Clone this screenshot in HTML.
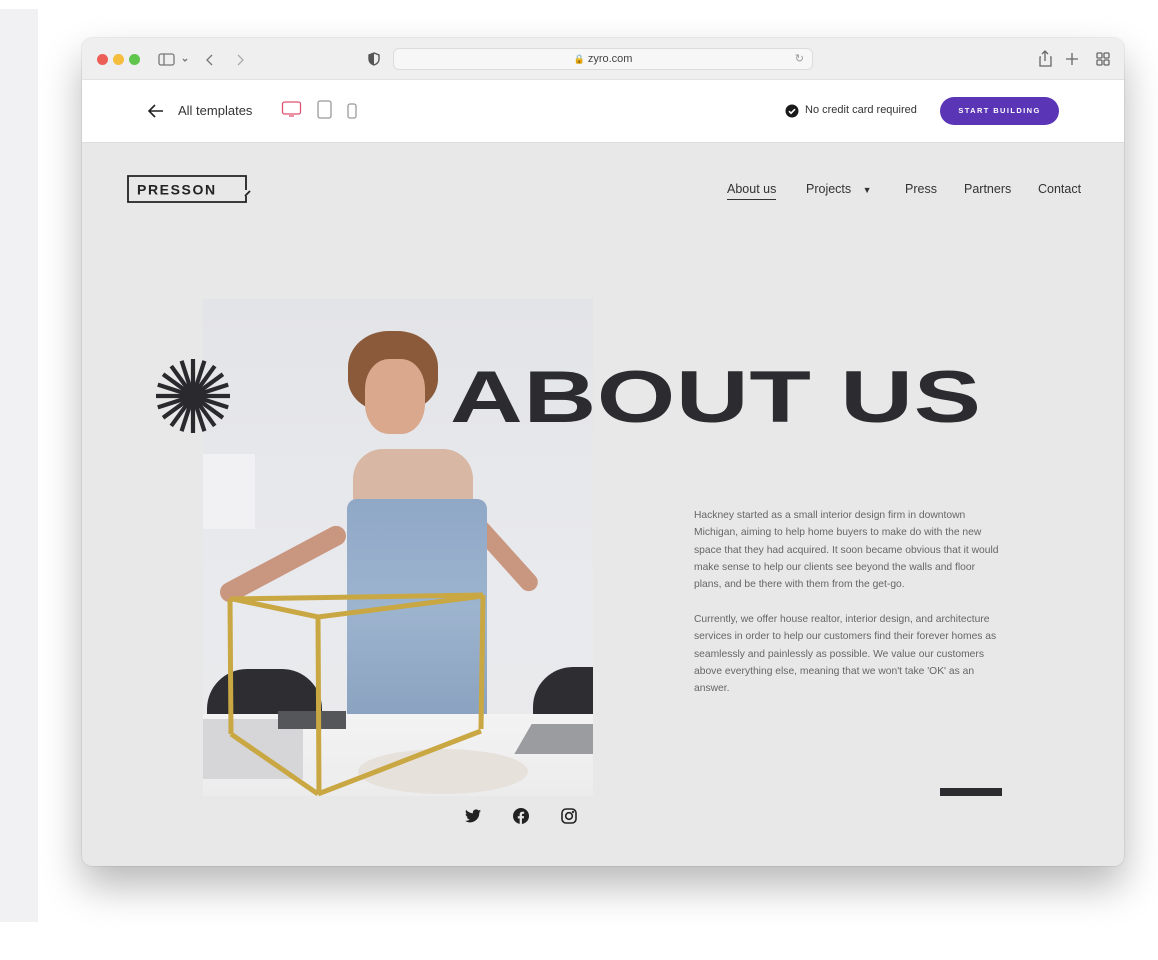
<!DOCTYPE html>
<html><head><meta charset="utf-8">
<style>
*{margin:0;padding:0;box-sizing:border-box}
body{width:1158px;height:960px;background:#fff;position:relative;overflow:hidden;font-family:"Liberation Sans",sans-serif}
.strip{position:absolute;left:0;top:9px;width:38px;height:913px;background:#f1f1f3}
.win{position:absolute;left:82px;top:38px;width:1042px;height:828px;border-radius:10px;overflow:hidden;background:#e8e8e8;box-shadow:0 20px 40px rgba(0,0,0,.28),0 0 0 1px rgba(0,0,0,.06)}
.tb{position:absolute;left:0;top:0;width:100%;height:42px;background:#efefef;border-bottom:1px solid #e2e2e2}
.dot{position:absolute;top:16px;width:11px;height:11px;border-radius:50%}
.url{position:absolute;left:311px;top:10px;width:420px;height:22px;border-radius:6px;background:#f7f7f7;border:1px solid #dcdcdc;font-size:11px;color:#444;text-align:center;line-height:20px}
.wb{position:absolute;left:0;top:42px;width:100%;height:63px;background:#fff;border-bottom:1px solid #ddd}
.abs{position:absolute}
.nav{position:absolute;top:144px;font-size:12.5px;color:#333}
.para{position:absolute;left:612px;width:310px;font-size:10.3px;line-height:17.3px;color:#666}
</style></head><body>
<div class="strip"></div>
<div class="win">
 <div class="tb">
  <div class="dot" style="left:15px;background:#ec5f57"></div>
  <div class="dot" style="left:31px;background:#f4bd3b"></div>
  <div class="dot" style="left:47px;background:#5fc54b"></div>
  <svg class="abs" style="left:76px;top:14px" width="60" height="16" viewBox="0 0 60 16" fill="none" stroke="#777" stroke-width="1.3"><rect x="1" y="2" width="15" height="11" rx="2"/><line x1="6" y1="2" x2="6" y2="13"/><path d="M25 7l2 2 2-2"/><path d="M54 3l-5 5 5 5"/></svg>
  <svg class="abs" style="left:153px;top:14px" width="12" height="16" fill="none" stroke="#aaa" stroke-width="1.3"><path d="M3 3l5 5-5 5"/></svg>
  <svg class="abs" style="left:286px;top:14px" width="12" height="14" viewBox="0 0 12 14"><path d="M6 1L1 3v4c0 3 2 5 5 6 3-1 5-3 5-6V3z" fill="none" stroke="#555" stroke-width="1.4"/><path d="M6 1v12c-3-1-5-3-5-6V3z" fill="#555"/></svg>
  <div class="url"><span style="font-size:9px;color:#888">🔒</span> zyro.com<span style="position:absolute;right:8px;color:#999">↻</span></div>
  <svg class="abs" style="left:956px;top:12px" width="76" height="18" fill="none" stroke="#666" stroke-width="1.3"><path d="M3 7h-1v9h11V7h-1M7 1v10M4 4l3-3 3 3"/><path d="M34 3v12M28 9h12"/><rect x="59" y="3" width="5" height="5" rx="1"/><rect x="66" y="3" width="5" height="5" rx="1"/><rect x="59" y="10" width="5" height="5" rx="1"/><rect x="66" y="10" width="5" height="5" rx="1"/></svg>
 </div>
 <div class="wb">
  <svg class="abs" style="left:66px;top:24px" width="16" height="14" fill="none" stroke="#222" stroke-width="1.6"><path d="M15 7H2M7 1L1 7l6 6"/></svg>
  <div class="abs" style="left:96px;top:23px;font-size:13px;color:#333">All templates</div>
  <svg class="abs" style="left:199px;top:20px" width="90" height="20" fill="none" stroke-width="1.3"><rect x="1.5" y="2" width="18" height="12" rx="2" stroke="#e0526e"/><path d="M8 16h5" stroke="#e0526e"/><rect x="37" y="1" width="13" height="17" rx="2" stroke="#999"/><rect x="67" y="4" width="8" height="14" rx="2" stroke="#999"/></svg>
  <svg class="abs" style="left:703px;top:24px" width="14" height="14"><circle cx="7" cy="7" r="6.5" fill="#1a1a1a"/><path d="M4 7.2l2 2 4-4" stroke="#fff" stroke-width="1.6" fill="none"/></svg>
  <div class="abs" style="left:723px;top:24px;font-size:11px;color:#333">No credit card required</div>
  <div class="abs" style="left:858px;top:17px;width:119px;height:28px;border-radius:14px;background:#5a36b6;color:#fff;font-size:7.5px;font-weight:bold;letter-spacing:1.4px;text-align:center;line-height:28px">START BUILDING</div>
 </div>
 <svg class="abs" style="left:45px;top:137px" width="130" height="29" fill="none" stroke="#222" stroke-width="1.8"><path d="M119 15V1H1v26h118v-6M118 21l5-5"/><text x="10" y="19.5" font-family="Liberation Sans,sans-serif" font-size="14" font-weight="bold" letter-spacing="1.6" fill="#222" stroke="none">PRESSON</text></svg>
 <div class="nav" style="left:645px">About us<div style="height:1px;background:#333;margin-top:3px"></div></div>
 <div class="nav" style="left:724px">Projects <span style="font-size:9px;margin-left:8px">▼</span></div>
 <div class="nav" style="left:823px">Press</div>
 <div class="nav" style="left:882px">Partners</div>
 <div class="nav" style="left:956px">Contact</div>
 <div class="abs" style="left:121px;top:261px;width:390px;height:497px;overflow:hidden;background:linear-gradient(#e3e4e8,#e9eaee 60%,#eaeaea)">
  <div class="abs" style="left:0;top:155px;width:52px;height:75px;background:#f1f1f3"></div>
  <div class="abs" style="left:145px;top:32px;width:90px;height:80px;border-radius:45% 45% 40% 40%;background:#8a5a3a"></div>
  <div class="abs" style="left:162px;top:60px;width:60px;height:75px;border-radius:40%;background:#d9a88d"></div>
  <div class="abs" style="left:10px;top:255px;width:140px;height:20px;background:#c99680;transform:rotate(-28deg);border-radius:10px"></div>
  <div class="abs" style="left:240px;top:240px;width:110px;height:18px;background:#c99680;transform:rotate(48deg);border-radius:10px"></div>
  <div class="abs" style="left:150px;top:150px;width:120px;height:100px;border-radius:30px 30px 0 0;background:#d8b8a4"></div>
  <div class="abs" style="left:144px;top:200px;width:140px;height:220px;background:linear-gradient(#8fa8c6,#9db4cf 50%,#8aa2bf);border-radius:10px 10px 0 0"></div>
  <div class="abs" style="left:4px;top:370px;width:115px;height:60px;border-radius:40px 40px 0 0;background:#2e2e32"></div>
  <div class="abs" style="left:330px;top:368px;width:70px;height:60px;border-radius:40px 0 0 0;background:#2e2e32"></div>
  <div class="abs" style="left:0;top:415px;width:390px;height:82px;background:linear-gradient(#f3f3f3,#ececec)"></div>
  <div class="abs" style="left:0;top:420px;width:100px;height:60px;background:#d6d6d8"></div>
  <div class="abs" style="left:155px;top:450px;width:170px;height:45px;border-radius:50%;background:#e7e1dc"></div>
  <div class="abs" style="left:320px;top:425px;width:80px;height:30px;background:#9a9ca0;transform:skewX(-30deg)"></div>
  <div class="abs" style="left:75px;top:412px;width:68px;height:18px;background:#55565a"></div>
  <svg class="abs" style="left:0;top:0" width="390" height="497" fill="none" stroke="#c9a742" stroke-width="5"><path d="M27 300L280 296M27 300L28 435M280 296L278 430M115 317L116 495M30 300L115 318L280 297M115 495L278 432M28 435L115 495"/></svg>
 </div>
 <svg class="abs" style="left:73px;top:320px" width="76" height="76" viewBox="-38 -38 76 76"><g stroke="#2a2a2e" stroke-width="4.2"><line x1="-37" y1="0" x2="37" y2="0"/><line x1="-37" y1="0" x2="37" y2="0" transform="rotate(18)"/><line x1="-37" y1="0" x2="37" y2="0" transform="rotate(36)"/><line x1="-37" y1="0" x2="37" y2="0" transform="rotate(54)"/><line x1="-37" y1="0" x2="37" y2="0" transform="rotate(72)"/><line x1="-37" y1="0" x2="37" y2="0" transform="rotate(90)"/><line x1="-37" y1="0" x2="37" y2="0" transform="rotate(108)"/><line x1="-37" y1="0" x2="37" y2="0" transform="rotate(126)"/><line x1="-37" y1="0" x2="37" y2="0" transform="rotate(144)"/><line x1="-37" y1="0" x2="37" y2="0" transform="rotate(162)"/></g><circle r="9" fill="#2a2a2e"/></svg>
 <div class="abs" style="left:368px;top:317px;font-size:73px;font-weight:bold;color:#2b2b30;transform:scaleX(1.38);transform-origin:0 0;white-space:nowrap;line-height:86px;letter-spacing:0.5px">ABOUT US</div>
 <div class="para" style="top:469px">Hackney started as a small interior design firm in downtown Michigan, aiming to help home buyers to make do with the new space that they had acquired. It soon became obvious that it would make sense to help our clients see beyond the walls and floor plans, and be there with them from the get-go.</div>
 <div class="para" style="top:573px">Currently, we offer house realtor, interior design, and architecture services in order to help our customers find their forever homes as seamlessly and painlessly as possible. We value our customers above everything else, meaning that we won't take 'OK' as an answer.</div>
 <div class="abs" style="left:858px;top:750px;width:62px;height:8px;background:#2b2b30"></div>
 <svg class="abs" style="left:383px;top:771px" width="16" height="14" viewBox="0 0 24 20"><path fill="#222" d="M24 2.4c-.9.4-1.8.7-2.8.8 1-.6 1.8-1.6 2.2-2.7-1 .6-2 1-3.1 1.2A4.9 4.9 0 0 0 11.9 6C7.8 5.8 4.2 3.9 1.7.9c-1.3 2.3-.6 5.1 1.5 6.6-.8 0-1.6-.2-2.2-.6 0 2.4 1.7 4.5 3.9 4.9-.7.2-1.5.2-2.2.1.6 2 2.5 3.4 4.6 3.4A9.9 9.9 0 0 1 0 17.3 14 14 0 0 0 21.5 4.9c1-.7 1.8-1.5 2.5-2.5z"/></svg>
 <svg class="abs" style="left:431px;top:770px" width="16" height="16" viewBox="0 0 24 24"><circle cx="12" cy="12" r="12" fill="#222"/><path fill="#e8e8e8" d="M13.4 24v-8.5h2.8l.4-3.3h-3.2v-2c0-.9.3-1.6 1.6-1.6h1.7V5.7c-.3 0-1.3-.1-2.5-.1-2.5 0-4.2 1.5-4.2 4.3v2.4H7.2v3.3H10V24z"/></svg>
 <svg class="abs" style="left:479px;top:770px" width="16" height="16" viewBox="0 0 24 24" fill="none" stroke="#222" stroke-width="2.4"><rect x="1.5" y="1.5" width="21" height="21" rx="6"/><circle cx="12" cy="12" r="5"/><circle cx="18" cy="6" r=".6" fill="#222"/></svg>
</div>
</body></html>
